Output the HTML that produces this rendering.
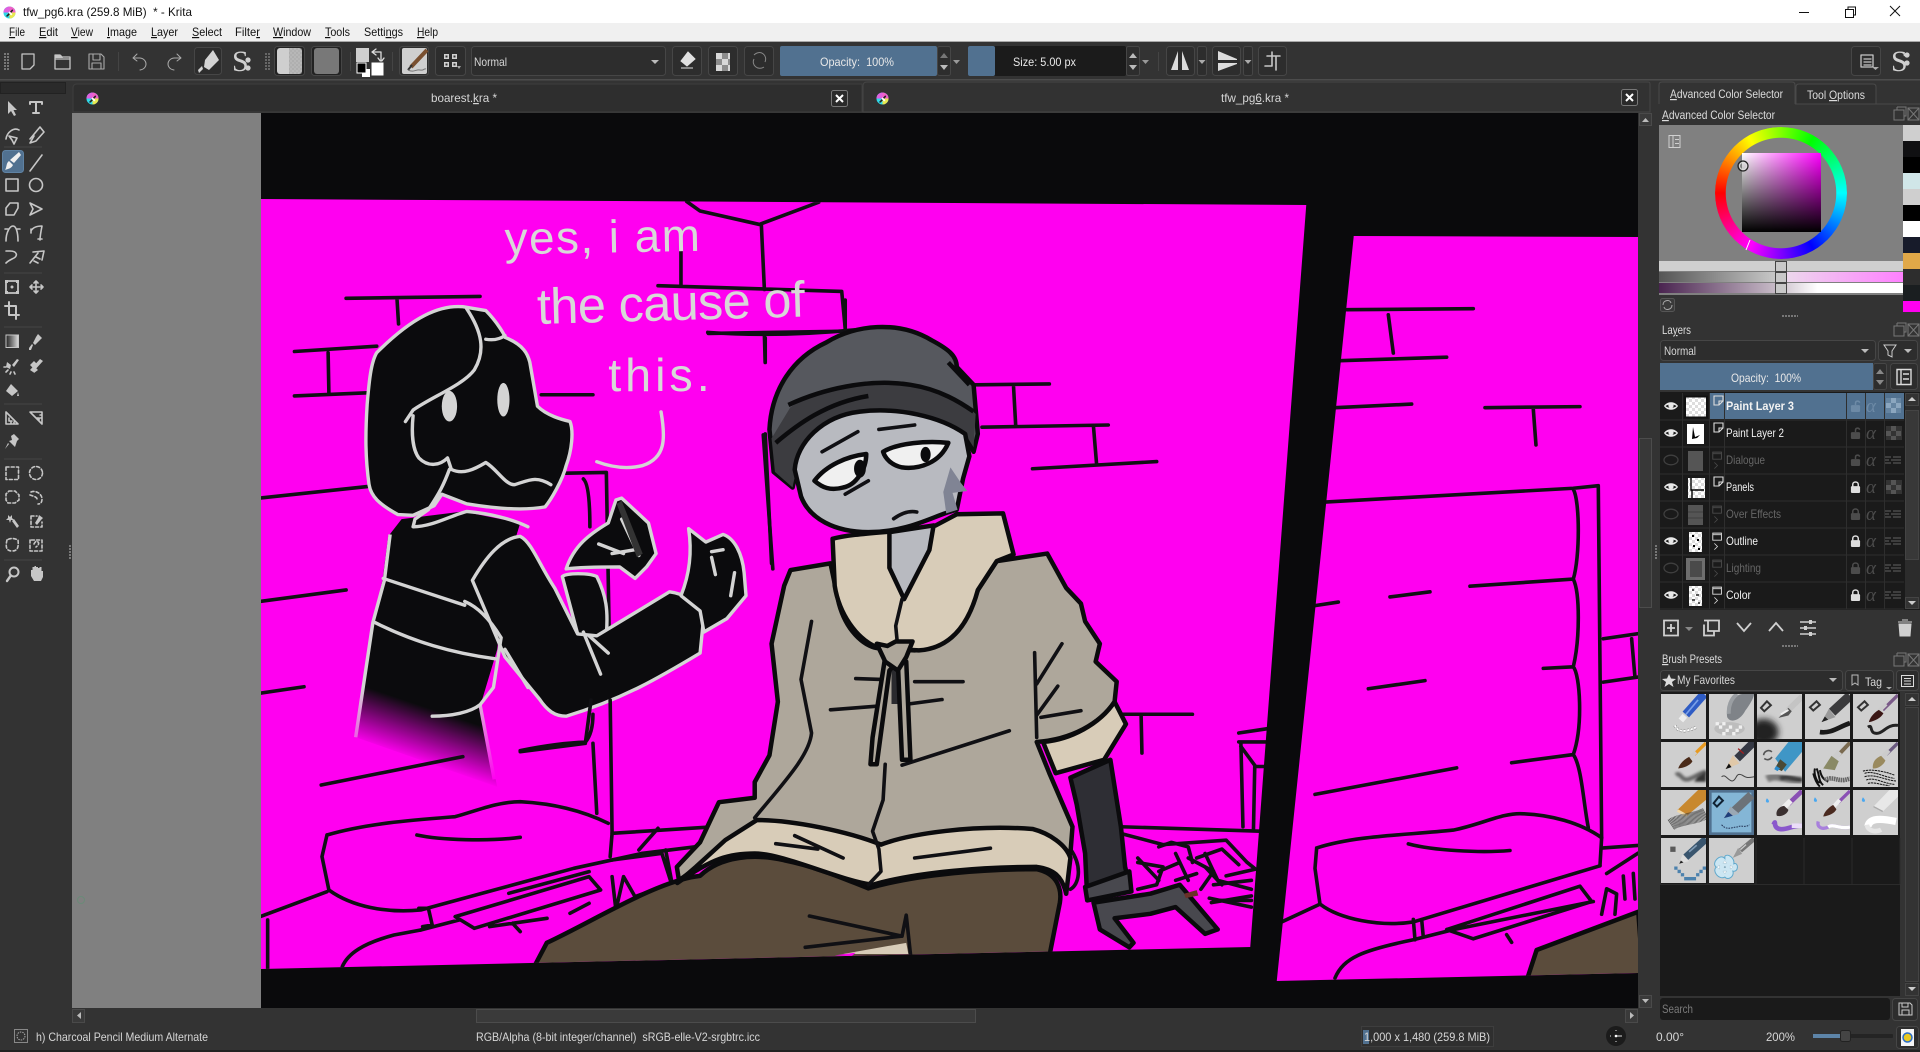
<!DOCTYPE html>
<html lang="en"><head><meta charset="utf-8"><title>tfw_pg6.kra - Krita</title>
<style>
html,body{margin:0;padding:0;width:1920px;height:1052px;overflow:hidden;background:#333}
svg{position:absolute;left:0;top:0}
text{font-family:"Liberation Sans",sans-serif;font-size:12px;fill:#d6d6d6;white-space:pre}
.m{fill:#111}
.d{fill:#666}
.u{text-decoration:underline}
.i{fill:none;stroke:#c6c6c6;stroke-width:1.6;stroke-linecap:round;stroke-linejoin:round}
.f{fill:#c6c6c6;stroke:none}
.b{fill:#2d2d2d;stroke:#464646}
.k{fill:none;stroke:#101014;stroke-width:3.6;stroke-linecap:round;stroke-linejoin:round}
.k path,.l path,path.l{vector-effect:non-scaling-stroke}
.l{fill:none;stroke:#d4d4d4;stroke-width:3.4;stroke-linecap:round;stroke-linejoin:round}
.sh{stroke:#0b0b0d;stroke-width:4.5;stroke-linejoin:round;vector-effect:non-scaling-stroke}
#wheel{position:absolute;left:1714.5px;top:126.5px;width:132px;height:132px;border-radius:50%;background:conic-gradient(from 270deg,#f00,#ff0 60deg,#0f0 120deg,#0ff 180deg,#00f 240deg,#f0f 300deg,#f00);-webkit-mask:radial-gradient(circle,transparent 55px,#000 55.5px);mask:radial-gradient(circle,transparent 55px,#000 55.5px)}
#sq{position:absolute;left:1742px;top:153px;width:79px;height:79px;background:linear-gradient(to top,#000,rgba(0,0,0,0)),linear-gradient(to right,#fff,#f0f)}
</style></head><body>
<svg width="1920" height="1052" viewBox="0 0 1920 1052" xmlns="http://www.w3.org/2000/svg">
<defs>
<clipPath id="cv"><rect x="261" y="113" width="1377" height="895"/></clipPath>
<clipPath id="lp"><polygon points="261,199 1307,205 1251,947 261,969"/></clipPath>
<clipPath id="rp"><polygon points="1353,236 1638,237 1638,973 1276,981"/></clipPath>
<filter id="bl" x="-50%" y="-50%" width="200%" height="200%"><feGaussianBlur stdDeviation="10"/></filter>
<filter id="bl2" x="-50%" y="-50%" width="200%" height="200%"><feGaussianBlur stdDeviation="4"/></filter>
<linearGradient id="fade" gradientUnits="userSpaceOnUse" x1="400" y1="1340" x2="355" y2="1473"><stop offset="0" stop-color="#0b0b0d"/><stop offset="1" stop-color="#ff00f0"/></linearGradient>
<linearGradient id="ofade" gradientUnits="userSpaceOnUse" x1="0" y1="1300" x2="0" y2="1540"><stop offset="0" stop-color="#d4d4d4"/><stop offset="1" stop-color="#ff00f0"/></linearGradient>
<linearGradient id="g2"><stop offset="0" stop-color="#555"/><stop offset=".48" stop-color="#c8c8c8"/><stop offset=".52" stop-color="#ecd8ec"/><stop offset="1" stop-color="#ff80ff"/></linearGradient>
<linearGradient id="g3"><stop offset="0" stop-color="#4a2450"/><stop offset=".48" stop-color="#c8bcc8"/><stop offset=".65" stop-color="#fff"/><stop offset="1" stop-color="#fff"/></linearGradient>
<linearGradient id="gs" x1="0" x2="1"><stop offset="0" stop-color="#222"/><stop offset="1" stop-color="#ddd"/></linearGradient>
<pattern id="chk" width="6" height="6" patternUnits="userSpaceOnUse"><rect width="6" height="6" fill="#fff"/><rect width="3" height="3" fill="#ddd"/><rect x="3" y="3" width="3" height="3" fill="#ddd"/></pattern>
<pattern id="nz" width="4" height="4" patternUnits="userSpaceOnUse"><rect width="4" height="4" fill="#8a8a8a"/><rect width="2" height="2" fill="#707070"/><rect x="2" y="2" width="2" height="2" fill="#777"/></pattern>
<symbol id="krita" viewBox="0 0 14 14" overflow="visible"><circle cx="7" cy="7" r="6.5" fill="#30d8e8"/><path d="M7 .5A6.5 6.5 0 0 1 13.5 7L7 7Z" fill="#f060c8"/><path d="M.5 7A6.5 6.5 0 0 1 7 .5L7 7Z" fill="#e060e0"/><path d="M7 13.5A6.5 6.5 0 0 0 13.5 7L7 7Z" fill="#e8e850"/><path d="M3 11L10 3.5L11 5L5 11.5Z" fill="#222"/><path d="M6.5 6.5L9.5 9.5" stroke="#fff" stroke-width="2"/></symbol>
<symbol id="eye" viewBox="0 0 16 14" overflow="visible"><path d="M1 7C4 2 12 2 15 7C12 12 4 12 1 7Z" fill="#e8e8e8"/><path d="M2.5 7C5 9.5 11 9.5 13.5 7C11 5 5 5 2.5 7Z" fill="#1a1a1a"/><circle cx="8" cy="6.6" r="2.6" fill="#e8e8e8"/></symbol>
<symbol id="eyec" viewBox="0 0 16 14" overflow="visible"><ellipse cx="8" cy="7" rx="7" ry="4.8" fill="none" stroke="#3f3f3f" stroke-width="1.3"/></symbol>
<symbol id="lockc" viewBox="0 0 12 14" overflow="visible"><rect x="1" y="6" width="10" height="7.5" rx="1.2"/><path d="M3 6.5V4.2C3 .7 9 .7 9 4.2V6.5" fill="none" stroke-width="1.6" stroke="currentColor"/></symbol>
<symbol id="locko" viewBox="0 0 12 14" overflow="visible"><rect x="1" y="6" width="10" height="7.5" rx="1.2"/><path d="M6 6V4C6 1 10 1 10.5 3.5" fill="none" stroke-width="1.6" stroke="currentColor"/></symbol>
<symbol id="chkb" viewBox="0 0 16 14"><rect width="16" height="14" fill="#333"/><path d="M5 0h5v5H5zM0 5h5v5H0zM10 5h5v5h-5zM5 10h5v4H5z" fill="#555"/></symbol>
<symbol id="inh" viewBox="0 0 16 8"><path d="M0 1h6M8 1h8M0 4h4M6 4h10M0 7h6M8 7h8" stroke="#4a4a4a" stroke-width="1.6"/></symbol>
<symbol id="lay" viewBox="0 0 12 12" overflow="visible"><path d="M1 1H10V6L6 10H1ZM10 6H6V10" fill="none" stroke="#ddd" stroke-width="1.1"/></symbol>
<symbol id="grp" viewBox="0 0 14 22" overflow="visible"><path d="M1 1H12V10H1ZM1 3H12" fill="none" stroke="currentColor" stroke-width="1.2"/><path d="M3 14L7 18L3 22" fill="none" stroke="currentColor" stroke-width="1"/></symbol>
</defs>

<!-- chrome -->
<rect width="1920" height="23" fill="#fff"/>
<rect y="23" width="1920" height="18" fill="#f0f0f0"/>
<rect y="41" width="1920" height="1" fill="#a8a8a8"/>
<rect y="42" width="1920" height="1010" fill="#333"/>
<rect y="79" width="1920" height="1.5" fill="#4c4c4c"/>
<rect y="1050" width="1920" height="2" fill="#222"/>

<use href="#krita" x="3" y="6" width="13" height="13"/>
<text x="23" y="16" style="fill:#111" textLength="169" lengthAdjust="spacingAndGlyphs">tfw_pg6.kra (259.8 MiB)  * - Krita</text>
<path d="M1799 12.500H1809" stroke="#111" stroke-width="1"/>
<path d="M1845.500 9.500H1853.500V17.500H1845.500ZM1848 9.500V7H1855.500V15H1853.500" fill="none" stroke="#111"/>
<path d="M1890 6L1900 16M1900 6L1890 16" stroke="#111" stroke-width="1"/>

<g font-size="12">
<text class="m" x="9" y="36" textLength="16" lengthAdjust="spacingAndGlyphs"><tspan class="u">F</tspan>ile</text>
<text class="m" x="39" y="36" textLength="19" lengthAdjust="spacingAndGlyphs"><tspan class="u">E</tspan>dit</text>
<text class="m" x="71" y="36" textLength="22" lengthAdjust="spacingAndGlyphs"><tspan class="u">V</tspan>iew</text>
<text class="m" x="107" y="36" textLength="30" lengthAdjust="spacingAndGlyphs"><tspan class="u">I</tspan>mage</text>
<text class="m" x="151" y="36" textLength="27" lengthAdjust="spacingAndGlyphs"><tspan class="u">L</tspan>ayer</text>
<text class="m" x="192" y="36" textLength="30" lengthAdjust="spacingAndGlyphs"><tspan class="u">S</tspan>elect</text>
<text class="m" x="235" y="36" textLength="25" lengthAdjust="spacingAndGlyphs">Filte<tspan class="u">r</tspan></text>
<text class="m" x="273" y="36" textLength="38" lengthAdjust="spacingAndGlyphs"><tspan class="u">W</tspan>indow</text>
<text class="m" x="325" y="36" textLength="25" lengthAdjust="spacingAndGlyphs"><tspan class="u">T</tspan>ools</text>
<text class="m" x="364" y="36" textLength="39" lengthAdjust="spacingAndGlyphs">Setti<tspan class="u">n</tspan>gs</text>
<text class="m" x="417" y="36" textLength="21" lengthAdjust="spacingAndGlyphs"><tspan class="u">H</tspan>elp</text>
</g>

<!-- top toolbar -->
<path d="M5 53V70M8 53V70" stroke="#777" stroke-width="2" stroke-dasharray="2 1"/>
<path class="i" style="stroke-width:1.3" d="M22 54H34V65L30 69H22Z"/>
<path class="i" style="stroke-width:1.3" d="M55 55H60L62 57H70V69H55ZM55 59H70"/><path class="f" d="M55 55h6l2 3H55z"/>
<path class="i" style="stroke-width:1.1;stroke:#aaa" d="M89 54H101L104 57V69H89ZM93 54V60H100V54M92 69V63H101V69"/>
<rect x="118" y="52" width="1" height="19" fill="#444"/>
<path class="i" style="stroke-width:1;stroke:#aaa" d="M137 54L133 58L137 61M133 58H140C148 59 148 69 140 70"/>
<path class="i" style="stroke-width:1;stroke:#aaa" d="M177 54L181 58L177 61M181 58H174C166 59 166 69 174 70"/>
<rect class="b" x="194.500" y="47.500" width="27" height="27" rx="3"/>
<path class="f" d="M213 50L219 60L209 70L204 67L205 60ZM203 69L199 73L198 70L202 66Z" style="fill:#d4d4d4"/>
<text x="232" y="71" style="font-family:'Liberation Serif',serif;font-size:30px;fill:#d0d0d0">S</text>
<circle cx="248" cy="60" r="2.600" fill="#d0d0d0"/><circle cx="248" cy="68" r="2.600" fill="#d0d0d0"/>
<path d="M266 53V70M269 53V70" stroke="#666" stroke-width="2" stroke-dasharray="2 1"/>
<rect x="274.500" y="46.500" width="30" height="29" rx="3" fill="#222" stroke="#464646"/>
<rect x="277" y="48" width="25" height="26" rx="3" fill="#cfcfcf"/><rect x="289" y="48" width="13" height="26" fill="url(#nz)" opacity=".35"/>
<rect x="311.500" y="46.500" width="30" height="29" rx="3" fill="#222" stroke="#464646"/>
<rect x="314" y="48" width="25" height="26" rx="3" fill="#787878"/>
<rect x="350" y="52" width="1" height="19" fill="#444"/>
<rect x="356" y="48" width="13" height="14" fill="#cfcfcf"/>
<path class="i" style="stroke:#ddd;stroke-width:1.3" d="M372 52H381V60M376 49L372 52L376 55M378 58L381 62L384 58"/>
<rect x="371" y="62" width="13" height="14" fill="#fff" stroke="#333"/>
<rect x="362" y="69" width="8" height="8" fill="#fff"/>
<rect x="357" y="63" width="9" height="10" fill="#000" stroke="#fff"/>
<rect x="392" y="52" width="1" height="19" fill="#444"/>
<rect x="399.500" y="46.500" width="29" height="29" rx="3" fill="#2d2d2d" stroke="#464646"/>
<rect x="402" y="48" width="25" height="26" fill="#cfcfcf" rx="2"/>
<path d="M427 50L411 67" stroke="#7a5030" stroke-width="4"/><path d="M412 65L408 70" stroke="#333" stroke-width="2"/><path d="M408 70C414 73 416 69 420 70S424 68 426 69" stroke="#777" fill="none"/>
<rect class="b" x="435.500" y="46.500" width="30" height="29" rx="3"/>
<path d="M444 54h5v5h-5zM452 54h5v5h-5zM444 62h5v5h-5zM452 62h5v5h-5z" fill="#d2d2d2"/><path d="M445.500 55.500h2v2h-2zM453.500 55.500h2v2h-2zM445.500 63.500h2v2h-2zM453.500 63.500h2v2h-2z" fill="#333"/><path d="M457 66l4 0l-2 3z" fill="#aaa"/>
<rect class="b" x="471.500" y="46.500" width="194" height="29" rx="3"/>
<text x="474" y="66" textLength="33" lengthAdjust="spacingAndGlyphs">Normal</text>
<path d="M651 60h8l-4 4z" fill="#bbb"/>
<rect class="b" x="672.500" y="46.500" width="29" height="29" rx="3"/>
<path d="M688 52L695 59L687 66L681 61ZM681 68H693" fill="#e0e0e0" stroke="#e0e0e0"/>
<rect class="b" x="708.500" y="46.500" width="29" height="29" rx="3"/>
<path d="M716 53h6v6h-6zM728 53h2v6h-2zM722 59h6v6h-6zM716 65h6v6h-6zM728 65h2v6h-2z" fill="#d8d8d8"/><path d="M722 53h6v6h-6zM716 59h6v6h-6zM728 59h2v6h-2zM722 65h6v6h-6z" fill="#8c8c8c"/>
<rect class="b" x="744.500" y="46.500" width="29" height="29" rx="3"/>
<path d="M754 55C760 49 768 55 765 62M764 67C758 71 751 65 754 59" fill="none" stroke="#888"/>
<rect x="780" y="46" width="157" height="30" rx="2" fill="#517190"/>
<text x="820" y="66" style="fill:#e8e8e8" textLength="74" lengthAdjust="spacingAndGlyphs">Opacity:  100%</text>
<rect class="b" x="937.500" y="46.500" width="13" height="29" rx="2"/>
<path d="M940 58h8l-4-5z" fill="#777"/><path d="M940 65h8l-4 5z" fill="#bbb"/>
<path d="M953 60h7l-3.500 4z" fill="#999"/>
<rect x="968" y="46" width="158" height="30" rx="2" fill="#1b1b1b"/><rect x="968" y="46" width="27" height="30" rx="2" fill="#517190"/>
<text x="1013" y="66" style="fill:#e8e8e8" textLength="63" lengthAdjust="spacingAndGlyphs">Size: 5.00 px</text>
<rect class="b" x="1126.500" y="46.500" width="13" height="29" rx="2"/>
<path d="M1129 58h8l-4-5zM1129 65h8l-4 5z" fill="#bbb"/>
<path d="M1142 60h7l-3.500 4z" fill="#999"/>
<rect x="1158" y="52" width="1" height="19" fill="#444"/>
<rect class="b" x="1166.500" y="46.500" width="28" height="29" rx="3"/>
<path d="M1178 51L1171 70H1178ZM1182 51L1189 70H1182Z" fill="#dcdcdc"/>
<rect class="b" x="1197.500" y="46.500" width="9" height="29" rx="2"/><path d="M1198.500 60h7l-3.500 4z" fill="#aaa"/>
<rect class="b" x="1212.500" y="46.500" width="28" height="29" rx="3"/>
<path d="M1218 51L1237 59V60H1218ZM1218 63H1237V64L1218 71Z" fill="#dcdcdc"/>
<rect class="b" x="1243.500" y="46.500" width="9" height="29" rx="2"/><path d="M1244.500 60h7l-3.500 4z" fill="#aaa"/>
<rect class="b" x="1258.500" y="46.500" width="28" height="29" rx="3"/>
<path class="i" d="M1267 56H1280M1272 52V66H1265M1276 56V70" stroke-linecap="square"/>
<rect class="b" x="1851.500" y="46.500" width="29" height="29" rx="3"/>
<path class="i" style="stroke-width:1.3" d="M1861 55H1873V67H1861ZM1864 59H1871M1864 62H1871M1864 65H1871"/><path d="M1872 67h7l-3.500 3z" fill="#aaa"/>
<text x="1891" y="71" style="font-family:'Liberation Serif',serif;font-size:30px;fill:#d0d0d0">S</text>
<circle cx="1907" cy="55" r="2.600" fill="#d0d0d0"/><circle cx="1907" cy="63" r="2.600" fill="#d0d0d0"/>

<!-- tabs -->
<rect x="0.500" y="82.500" width="65" height="11" fill="#2a2a2a" stroke="#222"/>
<path d="M73 112V88Q73 84 77 84H862V112Z" fill="#2e2e2e" stroke="#3e3e3e"/>
<path d="M863 112V86Q863 82 867 82H1648Q1650 82 1650 84V112Z" fill="#323232" stroke="#454545"/>
<use href="#krita" x="86" y="92" width="13" height="13"/>
<use href="#krita" x="876" y="92" width="13" height="13"/>
<text x="431" y="102" textLength="66" lengthAdjust="spacingAndGlyphs">boarest.<tspan class="u">k</tspan>ra *</text>
<text x="1221" y="102" textLength="68" lengthAdjust="spacingAndGlyphs">tfw_pg<tspan class="u">6</tspan>.kra *</text>
<rect x="831.500" y="90.500" width="16" height="16" rx="2" fill="#2a2a2a" stroke="#777"/><path d="M836 95L843 102M843 95L836 102" stroke="#fff" stroke-width="2"/>
<rect x="1621.500" y="89.500" width="16" height="16" rx="2" fill="#2a2a2a" stroke="#777"/><path d="M1626 94L1633 101M1633 94L1626 101" stroke="#fff" stroke-width="2"/>

<!-- canvas -->
<rect x="72" y="113" width="189" height="895" fill="#808080"/>
<rect x="261" y="113" width="1377" height="895" fill="#0a0a0c"/>
<circle cx="81" cy="900" r="3.500" fill="none" stroke="#6a8a78"/>
<g clip-path="url(#cv)">
<polygon points="261,199 1307,205 1251,947 261,969" fill="#ff00f0"/>
<polygon points="1353,236 1638,237 1638,973 1276,981" fill="#ff00f0"/>

<!-- LEFT ART -->
<g clip-path="url(#lp)">
<g transform="translate(260,190) scale(.3827)">
<g class="k">
<path d="M1115 30L1150 55L1305 90L1460 32M1310 90L1318 260M1100 150L1100 250M1040 250L1520 265L1530 370M1170 372Q1350 385 1560 365M1318 380L1320 450"/>
<path d="M225 283L575 278M358 285L362 350M90 422L305 408M178 425L180 530M90 538L280 530M735 535L870 535M0 805L280 775M0 1075L225 1045M0 1315L115 1298M1315 640L1340 990"/>
<path d="M800 740L905 738L915 1300M845 755Q862 770 862 880M680 1465Q780 1445 850 1443Q870 1420 870 1370"/>
</g>
<!-- goat body -->
<path d="M370 860L335 905L320 1020L295 1130L250 1430L620 1560L575 1350L620 1200L640 1000L680 870L530 840Z" fill="url(#fade)"/>
<path d="M340 900L325 1020L295 1130L250 1430" fill="none" stroke="url(#ofade)" stroke-width="9"/>
<path d="M575 1345L612 1540" fill="none" stroke="url(#ofade)" stroke-width="9"/>
<path class="l" style="fill:#0b0b0d" d="M790 1010C800 1000 860 1000 880 1010C905 1060 910 1100 905 1160L880 1180L830 1160Z"/>
<path class="l" style="fill:#0b0b0d" d="M555 1020C590 960 630 910 680 905C710 920 730 980 770 1040L830 1160L880 1165L1070 1050C1110 1055 1150 1080 1160 1110L1150 1210C1050 1270 950 1330 800 1375C770 1375 750 1360 730 1330L640 1220Z"/>
<path class="l" style="fill:#0b0b0d" d="M1100 1060C1120 1010 1130 950 1120 885L1165 920L1210 900C1240 910 1260 950 1265 1000L1270 1060L1220 1120L1160 1155L1150 1100Z"/>
<path class="l" style="fill:#0b0b0d" d="M800 990C820 930 860 900 910 870L930 810L945 805L1015 870L1035 950L1010 985L980 1015L940 985C890 985 840 985 800 990Z"/>
<path class="l" style="fill:#0b0b0d" d="M305 425C400 330 470 300 530 305L590 315C620 345 640 380 640 385C690 405 700 430 705 450L725 565C750 590 790 600 810 605C820 630 815 680 800 720C790 760 760 810 745 828C680 840 600 830 540 820L475 795L455 825L400 850L360 848C310 820 290 800 285 770C275 700 275 640 280 560C285 500 290 450 305 425Z"/>
<g class="l">
<path d="M540 310C580 370 590 420 560 470C530 510 450 540 400 575L380 605M400 590C395 640 400 680 415 700C440 725 470 720 490 700L500 730C530 745 560 730 590 712C620 730 640 770 665 770C700 760 720 745 760 770M495 730C480 770 470 790 440 835L405 860L400 880C450 880 500 850 540 840C600 845 660 860 700 880M590 390Q620 395 640 380"/>
<path d="M322 1015L535 1085M300 1130C400 1180 500 1210 615 1225M450 1375C500 1375 550 1365 575 1345M845 1155L890 1265M860 1165L910 1210M535 1075C570 1090 600 1120 630 1170M640 1200L700 1300M630 1170L610 1300L575 1345M885 925L950 950M945 860L990 955M920 950L980 940M1180 945L1210 940M1180 960L1190 1005M1240 1000L1230 1060"/>
</g>
<ellipse cx="495" cy="565" rx="20" ry="40" fill="#d4d4d4"/><ellipse cx="636" cy="548" rx="16" ry="44" fill="#d4d4d4"/>
<path d="M932 820L945 812L1000 950L985 960Z" fill="#333"/>
<path class="l" d="M1048 580C1060 650 1060 700 1000 720C960 730 920 725 880 710"/>
<text transform="rotate(-1 640 168)" x="640" y="168" style="font-size:120px;fill:#d8d8d8" textLength="510" lengthAdjust="spacing">yes, i am</text>
<text transform="rotate(-1.600 725 350)" x="725" y="350" style="font-size:132px;fill:#d8d8d8" textLength="700" lengthAdjust="spacing">the cause of</text>
<text x="910" y="525" style="font-size:122px;fill:#d8d8d8" textLength="265" lengthAdjust="spacing">this.</text>
</g>
<g transform="translate(260,700) scale(.3827,.3333)" class="k">
<path d="M160 255L530 170M915 0L920 400L915 470M870 130L880 340M680 155L850 130M865 0L850 130"/>
<path d="M0 650L175 575M20 660L20 805M175 405C280 370 400 360 510 350C560 335 620 305 680 305C760 310 840 330 910 370M175 405L162 470L180 570C240 620 330 640 420 630L820 505L1000 460M410 405C470 420 600 425 680 412M215 800C230 760 270 730 350 705L420 690"/>
<path d="M510 650L860 530L890 570L560 685ZM650 580L860 515M415 625L440 625L450 675L425 680M920 400L1190 380M1040 385L990 450M1000 460L1140 440M920 480L1050 460L1075 550L980 590M920 530L930 630L950 530L985 600M1060 450L1075 540M810 640L860 610M660 670L680 695M600 680L750 655M420 690L520 660"/>
</g>
<g transform="translate(700,300) scale(.4209,.4464)" class="k">
<path d="M20 75L335 70M345 0L345 70M155 85L155 140M655 190L830 188M745 195L750 280M670 285L970 280M935 285L942 365M790 378L1085 362M1000 928L1170 928M1048 930L1050 1015M155 300L170 590"/>
<path d="M1280 970L1350 960M1280 990L1350 990M1285 1000L1320 1045L1345 1045M1285 990L1290 1180M1318 1045L1315 1185M1000 1180L1330 1190"/>
<path d="M1000 1195L1100 1220L1250 1210L1300 1260L1320 1275L1250 1290M1040 1250L1090 1300M1200 1240L1230 1300L1310 1320M1210 1340L1310 1360M1215 1350L1310 1335M880 1230C910 1270 900 1310 880 1320"/>
<path d="M1090 1225L1120 1215L1160 1225L1170 1260M1160 1250L1220 1280L1190 1320M1130 1300L1180 1285M1220 1310L1310 1300M1040 1260L1100 1270L1085 1310L1040 1320M1220 1345H1310M1180 1250L1240 1230L1280 1265M1130 1240L1160 1300M1200 1270L1240 1310M1090 1280L1140 1260"/>
</g>
<g transform="translate(700,300) scale(.4209,.4464)">
<path class="sh" fill="#5b4c3c" d="M-392 1490L-364 1440C-250 1390 -100 1300 0 1290C50 1245 130 1240 200 1255C280 1270 350 1300 400 1318C520 1285 680 1275 800 1275C850 1285 860 1320 855 1350L830 1470L-392 1500Z"/>
<path class="sh" fill="#aea79b" d="M215 605L310 590L330 680C350 750 400 780 425 780L510 785C600 780 640 700 660 650L705 585L825 568L870 645L905 680L915 720L950 770L940 810L990 855L985 900C950 950 880 985 800 990L830 1060L885 1180L880 1240L620 1190L430 1220L135 1175L-50 1300L-55 1270L0 1215L45 1125L130 1115L130 1080L165 1020L185 900L170 770L200 640Z"/>
<path class="sh" fill="#d8ccb8" d="M135 1165C220 1165 350 1190 430 1220C500 1195 650 1175 790 1185C830 1195 870 1220 880 1250L870 1330C860 1290 840 1275 800 1270C680 1270 520 1280 410 1310C330 1300 200 1240 130 1240C70 1240 30 1250 -54 1306L-10 1270L60 1210Z"/>
<path class="sh" fill="#d8ccb8" d="M315 535C370 520 500 520 560 505L610 480L720 478L745 570L705 585L660 650C640 720 600 780 520 785L425 780C370 760 330 700 320 640Z"/>
<path class="sh" fill="#b8bac0" d="M450 520L555 505L545 560L485 670L450 600Z"/>
<path class="sh" fill="#d8ccb8" d="M985 900L1012 950L960 1030L845 1060L815 990C880 985 950 950 985 900Z"/>
<path class="sh" fill="#2e2e34" d="M880 1070L975 1030L1000 1180L1010 1270L1020 1310L920 1340L915 1240L895 1130Z"/>
<path class="sh" fill="#48484e" d="M915 1315L1020 1280L1025 1325L920 1345Z"/>
<path class="sh" fill="#48484e" d="M935 1350L1070 1330L1140 1310L1230 1410L1200 1420L1130 1360L1070 1375L985 1385L1030 1440L1020 1450L950 1410Z"/>
<path d="M1150 1330l30 -8l4 12l-30 6z" fill="#6a3028"/>
<path class="sh" fill="#56585e" d="M165 290C170 200 220 130 300 95C370 55 470 45 550 90C590 110 610 125 610 150L650 190L660 300L650 340L630 300C550 260 450 240 370 255C300 270 240 320 220 420L175 385Z"/>
<path fill="#3c3c40" d="M215 240C300 190 400 185 500 190C570 200 620 225 655 255L650 330L630 300C550 260 450 240 370 255C300 270 240 320 220 420L178 385L170 310Z"/>
<path class="sh" fill="none" d="M210 235C290 200 400 175 500 190C570 200 620 230 650 250M180 320C230 280 300 230 400 215"/>
<path class="sh" fill="none" d="M590 140L640 190"/>
<path class="sh" fill="#b8bac0" d="M225 380C230 320 290 260 380 250C470 240 570 260 630 300L640 350L625 400L610 470C560 480 500 520 400 520C320 520 260 490 240 440Z"/>
<path fill="#808494" d="M595 375L620 410L635 428L600 432L612 470L585 478L578 430Z"/>
<path class="sh" fill="#f0f0f0" d="M272 405C300 370 350 350 395 345C395 380 370 415 340 420C310 428 290 420 272 405Z"/>
<path class="sh" fill="#f0f0f0" d="M435 340C470 320 540 315 590 320C570 365 520 380 480 375C455 370 440 355 435 340Z"/>
<ellipse cx="380" cy="378" rx="14" ry="20" fill="#0b0b0d"/><ellipse cx="536" cy="346" rx="12" ry="17" fill="#0b0b0d"/>
<g class="k"><path d="M290 340L375 295M425 290L510 280M460 490Q490 470 515 475M345 435L400 405"/></g>
<g class="k">
<path d="M480 670L465 730L470 780M440 1040L435 1120L410 1190L425 1230L430 1280L400 1310M370 848L430 850M510 855L625 855M310 918L420 910M495 905L575 895M480 1042L735 965M265 720L240 850L265 970C260 1020 200 1080 130 1160M795 790L800 980M860 770L800 860M850 865L800 930M810 935L905 920M260 1380L480 1425L490 1378L500 1465M250 1450L480 1425M225 1200L340 1250M180 1218L280 1230M510 1250L690 1228"/>
</g>
<path d="M455 820L485 820L495 905L455 905Z" fill="#2a2a2e"/>
<path class="sh" fill="#aea79b" d="M440 800L410 980L405 1040L420 1040L450 830L470 810L480 1030L500 1030L490 810Z"/>
<path class="sh" fill="#aea79b" d="M420 770L445 775L465 765L505 765L490 800L470 830L440 810Z"/>
<path d="M340 1465L490 1440L495 1465Z" fill="#d8ccb8"/>
<path d="M320 1468L370 1462L360 1470Z" fill="#ff00f0"/>
</g>
</g>

<!-- RIGHT ART z12 -->
<g clip-path="url(#rp)">
<g transform="translate(1240,200) scale(.3333,.5102)">
<path class="sh" fill="#5b4c3c" d="M860 1530L890 1470L1195 1395L1210 1530Z"/>
<g class="k">
<path d="M320 215L700 213M445 225L460 300M300 315L620 308M285 407L515 400M735 407L1020 405M880 410L888 480"/>
<path d="M255 592L1000 565L1075 560M1000 567C1020 590 1020 700 1000 743C1020 770 1020 860 1000 915C1020 930 1030 1030 1000 1087C1025 1110 1030 1180 1045 1230M1075 560L1085 1250L1080 1305M690 757L1000 743M910 918L1000 915M815 1103L1000 1087M225 795L295 788M450 778L570 768M385 958L555 942M225 1165L650 1113"/>
<path d="M230 1270C350 1245 500 1245 640 1235C720 1225 790 1200 850 1203C930 1205 1020 1220 1085 1250M230 1270L225 1310L240 1380C300 1410 420 1425 520 1415L1080 1305M505 1262C580 1275 720 1280 810 1275M125 1415L240 1380M285 1525C310 1485 370 1470 520 1450L640 1430L1060 1375M620 1430L1020 1345L1055 1375L700 1448L620 1430M520 1410L525 1450M545 1410L550 1445M1085 1400L1100 1350L1130 1360L1125 1400M1090 860L1195 850M1090 945L1195 935M1175 860L1185 935M1090 1270L1195 1265M1100 1320L1195 1280M1150 1325L1155 1370M1180 1320L1185 1370M800 1440L815 1455"/>
</g>
</g>
</g>
<path d="M1307 205L1251 947M1353 236L1276 981" stroke="#0a0a0c" stroke-width="1.500" fill="none"/>
</g>

<!-- scrollbars -->
<rect x="1638" y="113" width="14" height="895" fill="#333"/>
<rect x="1639.500" y="113.500" width="12" height="12" fill="#3a3a3a" stroke="#4a4a4a"/><path d="M1642 122h7l-3.500-4z" fill="#bbb"/>
<rect x="1639.500" y="438.500" width="12" height="169" fill="#383838" stroke="#4c4c4c"/>
<rect x="1639.500" y="995.500" width="12" height="12" fill="#3a3a3a" stroke="#4a4a4a"/><path d="M1642 999h7l-3.500 4z" fill="#bbb"/>
<rect x="72.500" y="1009.500" width="12" height="13" fill="#3a3a3a" stroke="#4a4a4a"/><path d="M81 1012v7l-4-3.500z" fill="#bbb"/>
<rect x="476.500" y="1009.500" width="499" height="13" fill="#3a3a3a" stroke="#4c4c4c"/>
<rect x="1625.500" y="1009.500" width="12" height="13" fill="#3a3a3a" stroke="#4a4a4a"/><path d="M1630 1012v7l4-3.500z" fill="#bbb"/>
<path d="M70 545V560M1656 545V560" stroke="#777" stroke-width="2" stroke-dasharray="2 1"/>

<!-- left tools -->
<rect x="2.500" y="150.500" width="21" height="22" rx="3" fill="#517190" stroke="#5f82a3"/>
<path d="M4 147H42M4 273H42M4 327H42M4 404H42M4 459H42M4 560H42" stroke="#444" stroke-width="1"/>
<path class="f" d="M8 101L8 114L11 111L14 116L16 115L13.500 110H17Z"/>
<path class="i" style="stroke-width:2" d="M30 104V102H42V104M36 102V113M33 113H39"/>
<path class="i" d="M6 139C7 132 14 127 19 130M9 136L17 138L14 144L12 140Z"/>
<path class="i" d="M30 139L40 127L44 132L36 141L30 143L34 136"/>
<path d="M19 152L21 155L14 163L10 160ZM9 161L13 165C11 169 7 169 5 170C7 167 6 163 9 161Z" fill="#f0f0f0"/>
<path class="i" d="M30 171L42 155"/>
<rect class="i" x="6" y="179" width="12" height="12" stroke-linecap="square"/>
<circle class="i" cx="36" cy="185" r="6.500"/>
<path class="i" d="M6 214V208L10 203H18V208L14 215H6Z"/>
<path class="i" d="M30 203L42 209L30 215L33 209Z"/>
<path class="i" d="M6 241C6 232 10 226 13 226C16 226 18 232 18 241M5 229H8M17 229H20"/>
<path class="i" d="M31 231C33 227 38 226 42 226C41 231 40 236 40 240M31 229V233M38 239H42"/>
<path class="i" d="M6 251H10C17 251 19 256 12 259C8 261 6 263 6 263"/>
<path class="i" d="M30 263L38 253M33 252L44 251L42 260M36 257L40 259M34 261L38 263"/>
<path class="i" style="stroke-width:1.800" d="M6 281H18V293H6Z"/><circle cx="12" cy="287" r="1.500" class="f"/><path d="M5 280h3v3H5zM16 280h3v3h-3zM5 291h3v3H5zM16 291h3v3h-3z" class="f"/>
<path class="i" d="M30 287H43M36 281V293M32 285L30 287L32 289M41 285L43 287L41 289M34 283L36 281L38 283M34 291L36 293L38 291"/>
<path class="i" style="stroke-width:2" d="M9 302V315H19M5 306H16V319"/>
<rect x="6" y="335" width="12.500" height="12.500" fill="url(#gs)" stroke="#c6c6c6"/>
<path class="f" d="M38 334L42 338L40 340L35 345L33 343L36 337ZM33 345L31 350L29 350L29 348L32 344Z"/>
<path class="i" d="M6 372L8 370M10 374L11 372M6 367L4 367M14 372L15 374"/><path class="f" d="M17 359L19 360L14 367L12 365ZM7 362L11 365L10 369L6 367Z"/>
<path class="f" d="M30 365L34 361L37 364L33 368ZM35 367L38 370L34 373L32 370ZM40 359L43 361L33 372L30 370Z"/>
<path class="f" d="M11 384L18 391L12 396L6 391ZM18 392L19 396H17Z"/>
<path class="i" d="M6 412V424H18ZM9 418V421H12M11 424V422M14 424V422"/>
<path class="i" d="M30 412L42 424V412ZM36 418H39V421M42 415H40M42 418H40"/>
<path class="f" d="M11 436L14 434L19 439L17 441L15 447L9 441L12 440ZM9 444L5 449L6 447L8 443Z"/>
<g class="i" stroke-dasharray="3 2.200">
<rect x="6" y="467" width="12.500" height="12.500"/>
<circle cx="36" cy="473" r="6.500"/>
<path d="M9 491H15L19 495V500L15 503H8L6 500V494Z"/>
<path d="M31 492C36 490 42 494 42 499C42 503 40 504 38 504M30 495C33 496 37 497 37 499"/>
<path d="M31 516V527H42V522M31 516H37"/>
<path d="M7 540C5 548 7 551 12 551C17 551 19 548 18 540C14 538 10 538 7 540Z"/>
<path d="M30 540V551H42V540H30ZM34 544Q36 540 38 542T36 547"/>
</g>
<path class="f" d="M8 515L10 517L12 515L12 518L14 520L11 520L10 523L9 520L6 520L8 518ZM12 521L14 519L19 526L17 528Z"/>
<path class="f" d="M39 515L43 518L41 520L37 525L35 523L38 518Z"/>
<circle class="i" style="stroke-width:2" cx="14" cy="572" r="4.500"/><path class="i" style="stroke-width:2.400" d="M10.500 576L7 581"/>
<path class="f" d="M31 570h1.500v-3h2v-1h1.500v1h2v1h1.500v-1h2v4h1.500v6l-2 4h-7l-3-5Z"/>

<!-- right dock tabs -->
<path d="M1659 104V85Q1659 82 1662 82H1792Q1795 82 1795 85V104" fill="#333" stroke="#4a4a4a"/>
<path d="M1796 104V87Q1796 84 1799 84H1873Q1876 84 1876 87V104" fill="#2f2f2f" stroke="#4a4a4a"/>
<path d="M1795 104H1920" stroke="#4a4a4a"/>
<text x="1670" y="98" style="fill:#ddd" textLength="113" lengthAdjust="spacingAndGlyphs"><tspan class="u">A</tspan>dvanced Color Selector</text>
<text x="1807" y="99" style="fill:#ddd" textLength="58" lengthAdjust="spacingAndGlyphs">Tool <tspan class="u">O</tspan>ptions</text>
<text x="1662" y="119" style="fill:#ddd" textLength="113" lengthAdjust="spacingAndGlyphs"><tspan class="u">A</tspan>dvanced Color Selector</text>
<path d="M1894 110H1904V120H1894ZM1897 110V107M1897 107H1906V116H1904" fill="none" stroke="#777"/>
<path d="M1908 108H1919V120H1908ZM1908 108L1919 120M1919 108L1908 120" fill="none" stroke="#777"/>

<rect x="1659" y="125" width="244" height="170" fill="#808080"/>
<path d="M1669 135.500H1680V147.500H1669ZM1673 136V147M1675 139.500H1679M1675 143.500H1679" fill="none" stroke="#d0d0d0"/>
<rect x="1659" y="261" width="244" height="10" fill="#cfcfcf"/>
<rect x="1659" y="272" width="244" height="10" fill="url(#g2)"/>
<rect x="1659" y="283" width="244" height="10" fill="url(#g3)"/>
<path d="M1775.500 261.500h11v10h-11zM1775.500 272.500h11v10h-11zM1775.500 283.500h11v10h-11z" fill="#c8c8c8" stroke="#444"/>
<rect x="1903" y="125" width="17" height="16" fill="#cfcfcf"/><rect x="1903" y="141" width="17" height="16" fill="#101012"/><rect x="1903" y="157" width="17" height="16" fill="#000"/><rect x="1903" y="173" width="17" height="16" fill="#d0e6e8"/><rect x="1903" y="189" width="17" height="16" fill="#cfcfcf"/><rect x="1903" y="205" width="17" height="16" fill="#000"/><rect x="1903" y="221" width="17" height="16" fill="#fff"/><rect x="1903" y="237" width="17" height="16" fill="#171b2a"/><rect x="1903" y="253" width="17" height="16" fill="#e0a848"/><rect x="1903" y="269" width="17" height="16" fill="#2d2d2d"/><rect x="1903" y="285" width="17" height="16" fill="#1a1e20"/><rect x="1903" y="301" width="17" height="11" fill="#ff00f0"/>
<rect x="1660.500" y="298.500" width="14" height="13" rx="2" fill="#3a3a3a" stroke="#555"/><path d="M1663 305C1663 300 1670 299 1671 303M1672 305C1672 310 1665 311 1664 307" fill="none" stroke="#aaa"/>
<path d="M1782 316H1798" stroke="#777" stroke-width="2" stroke-dasharray="2 1"/>

<!-- layers -->
<text x="1662" y="334" style="fill:#ddd" textLength="29" lengthAdjust="spacingAndGlyphs">La<tspan class="u">y</tspan>ers</text>
<path d="M1894 326H1904V336H1894ZM1897 326V323M1897 323H1906V332H1904" fill="none" stroke="#777"/>
<path d="M1908 324H1919V336H1908ZM1908 324L1919 336M1919 324L1908 336" fill="none" stroke="#777"/>
<rect class="b" x="1660.500" y="340.500" width="215" height="20" rx="3"/>
<text x="1664" y="355" textLength="32" lengthAdjust="spacingAndGlyphs">Normal</text>
<path d="M1861 349h8l-4 4z" fill="#bbb"/>
<rect class="b" x="1878.500" y="340.500" width="39" height="20" rx="3"/>
<path d="M1884 345H1896L1892 351V357L1888 355V351Z" fill="none" stroke="#ccc"/><path d="M1904 349h8l-4 4z" fill="#bbb"/>
<rect x="1660" y="363" width="213" height="27" fill="#517190"/>
<text x="1731" y="382" style="fill:#e8e8e8" textLength="70" lengthAdjust="spacingAndGlyphs">Opacity:  100%</text>
<rect class="b" x="1873.500" y="363.500" width="13" height="26" rx="2"/><path d="M1876 374h8l-4-5zM1876 380h8l-4 5z" fill="#888"/>
<rect class="b" x="1890.500" y="363.500" width="27" height="26" rx="3"/>
<path d="M1897 369.500H1911V384.500H1897ZM1901 370V384M1903 374H1909M1903 379H1909" fill="none" stroke="#ddd" stroke-width="1.400"/>

<rect x="1660" y="392" width="260" height="218" fill="#1a1a1a"/>
<rect x="1710" y="393" width="194" height="26" fill="#517190"/>
<path d="M1660 420H1904M1660 447H1904M1660 474H1904M1660 501H1904M1660 528H1904M1660 555H1904M1660 582H1904M1660 609H1904M1682.500 393V609M1709.500 393V609M1724.500 393V609M1846.500 393V609M1865.500 393V609M1884.500 393V609" stroke="#2e2e2e"/>
<use href="#eye" x="1663" y="399" width="16" height="14"/><use href="#eye" x="1663" y="426" width="16" height="14"/><use href="#eyec" x="1663" y="453" width="16" height="14"/><use href="#eye" x="1663" y="480" width="16" height="14"/><use href="#eyec" x="1663" y="507" width="16" height="14"/><use href="#eye" x="1663" y="534" width="16" height="14"/><use href="#eyec" x="1663" y="561" width="16" height="14"/><use href="#eye" x="1663" y="588" width="16" height="14"/>
<rect x="1685" y="396.500" width="22" height="21" fill="url(#chk)" stroke="#111" stroke-width="2"/>
<rect x="1687" y="424" width="17" height="20" fill="#fff"/><path d="M1693 427L1695 437L1700 435L1697 438L1692 439Z" fill="#000"/>
<rect x="1688" y="451" width="15" height="20" fill="#555"/>
<rect x="1688" y="478" width="17" height="20" fill="url(#chk)"/><path d="M1691 478V490H1704M1692 490V498" stroke="#000" stroke-width="1.400" fill="none"/>
<rect x="1688" y="505" width="15" height="20" fill="#555"/><path d="M1688 512h15M1688 518h15" stroke="#3e3e3e"/>
<rect x="1689" y="532" width="13" height="20" fill="url(#chk)"/><path d="M1692 536h2M1697 540h2M1693 546h2M1698 549h2" stroke="#000" stroke-width="2"/>
<rect x="1686" y="558" width="19" height="22" fill="#6e6e6e"/><rect x="1690" y="561" width="12" height="16" fill="#4a4a4a"/>
<rect x="1689" y="586" width="13" height="20" fill="url(#chk)"/><path d="M1692 590h2M1696 595h3M1692 600h3M1698 603h2" stroke="#555" stroke-width="2"/>
<use href="#lay" x="1713" y="395" width="12" height="12"/><use href="#lay" x="1713" y="422" width="12" height="12"/>
<use href="#grp" x="1712" y="449" width="11" height="22" color="#4a4a4a"/>
<use href="#lay" x="1713" y="476" width="12" height="12"/>
<use href="#grp" x="1712" y="503" width="11" height="22" color="#4a4a4a"/>
<use href="#grp" x="1712" y="530" width="11" height="22" color="#ddd"/>
<use href="#grp" x="1712" y="557" width="11" height="22" color="#4a4a4a"/>
<use href="#grp" x="1712" y="584" width="11" height="22" color="#ddd"/>
<text x="1726" y="410" style="fill:#f2f2f2;font-weight:bold" textLength="68" lengthAdjust="spacingAndGlyphs">Paint Layer 3</text>
<text x="1726" y="437" style="fill:#f2f2f2" textLength="58" lengthAdjust="spacingAndGlyphs">Paint Layer 2</text>
<text x="1726" y="464" class="d" textLength="39" lengthAdjust="spacingAndGlyphs">Dialogue</text>
<text x="1726" y="491" style="fill:#f2f2f2" textLength="28" lengthAdjust="spacingAndGlyphs">Panels</text>
<text x="1726" y="518" class="d" textLength="55" lengthAdjust="spacingAndGlyphs">Over Effects</text>
<text x="1726" y="545" style="fill:#f2f2f2" textLength="32" lengthAdjust="spacingAndGlyphs">Outline</text>
<text x="1726" y="572" class="d" textLength="35" lengthAdjust="spacingAndGlyphs">Lighting</text>
<text x="1726" y="599" style="fill:#f2f2f2" textLength="25" lengthAdjust="spacingAndGlyphs">Color</text>
<use href="#locko" x="1850" y="399" width="11" height="14" fill="#6d8aa6" color="#6d8aa6"/>
<use href="#locko" x="1850" y="426" width="11" height="14" fill="#4c4c4c" color="#4c4c4c"/>
<use href="#locko" x="1850" y="453" width="11" height="14" fill="#4c4c4c" color="#4c4c4c"/>
<use href="#lockc" x="1850" y="480" width="11" height="14" fill="#ddd" color="#ddd"/>
<use href="#lockc" x="1850" y="507" width="11" height="14" fill="#4c4c4c" color="#4c4c4c"/>
<use href="#lockc" x="1850" y="534" width="11" height="14" fill="#ddd" color="#ddd"/>
<use href="#lockc" x="1850" y="561" width="11" height="14" fill="#4c4c4c" color="#4c4c4c"/>
<use href="#lockc" x="1850" y="588" width="11" height="14" fill="#ddd" color="#ddd"/>
<text x="1866" y="412" style="fill:#6d8aa6;font:italic 19px 'Liberation Serif',serif">α</text>
<text x="1866" y="439" style="fill:#4c4c4c;font:italic 19px 'Liberation Serif',serif">α</text>
<text x="1866" y="466" style="fill:#4c4c4c;font:italic 19px 'Liberation Serif',serif">α</text>
<text x="1866" y="493" style="fill:#4c4c4c;font:italic 19px 'Liberation Serif',serif">α</text>
<text x="1866" y="520" style="fill:#4c4c4c;font:italic 19px 'Liberation Serif',serif">α</text>
<text x="1866" y="547" style="fill:#4c4c4c;font:italic 19px 'Liberation Serif',serif">α</text>
<text x="1866" y="574" style="fill:#4c4c4c;font:italic 19px 'Liberation Serif',serif">α</text>
<text x="1866" y="601" style="fill:#4c4c4c;font:italic 19px 'Liberation Serif',serif">α</text>
<svg x="1886" y="398" width="16" height="16" viewBox="0 0 16 16"><path d="M5 0h5v5H5zM0 5h5v5H0zM10 5h5v5h-5zM5 10h5v5H5z" fill="#8ba6bf"/><path d="M0 0h5v5H0zM10 0h5v5h-5zM5 5h5v5H5zM0 10h5v5H0zM10 10h5v5h-5z" fill="#6584a1"/></svg>
<use href="#chkb" x="1886" y="426" width="16" height="14"/>
<use href="#inh" x="1885" y="456" width="16" height="8"/>
<use href="#chkb" x="1886" y="480" width="16" height="14"/>
<use href="#inh" x="1885" y="510" width="16" height="8"/>
<use href="#inh" x="1885" y="537" width="16" height="8"/>
<use href="#inh" x="1885" y="564" width="16" height="8"/>
<use href="#inh" x="1885" y="591" width="16" height="8"/>
<rect x="1905" y="393" width="15" height="216" fill="#2c2c2c"/>
<rect x="1905.500" y="393.500" width="13" height="12" fill="#333" stroke="#444"/><path d="M1908 401h8l-4-4z" fill="#ccc"/>
<rect x="1905.500" y="410.500" width="13" height="149" fill="#383838" stroke="#444"/>
<rect x="1905.500" y="597.500" width="13" height="11" fill="#333" stroke="#444"/><path d="M1908 601h8l-4 4z" fill="#ccc"/>
<path d="M1664 620.500H1678V635.500H1664ZM1671 624V632M1667 628H1675" fill="none" stroke="#d0d0d0" stroke-width="1.800"/>
<path d="M1685 627h8l-4 4z" fill="#888"/>
<path d="M1704 620.500H1719V631H1708V620.500M1704 624.500V635.500H1714V631" fill="none" stroke="#d0d0d0" stroke-width="1.800"/>
<path d="M1737 623L1744 631L1751 623" fill="none" stroke="#d0d0d0" stroke-width="1.800"/>
<path d="M1769 631L1776 623L1783 631" fill="none" stroke="#d0d0d0" stroke-width="1.800"/>
<path d="M1800 622H1816M1800 628H1816M1800 634H1816" stroke="#d0d0d0" stroke-width="1.500"/><path d="M1809 620h3v4h-3zM1804 626h3v4h-3zM1809 632h3v4h-3z" fill="#d0d0d0"/>
<path d="M1899 624H1911L1910 636H1900ZM1898 622H1912M1902 620H1908" fill="#d0d0d0" stroke="#d0d0d0"/>
<path d="M1782 646H1798" stroke="#777" stroke-width="2" stroke-dasharray="2 1"/>

<!-- brush presets -->
<text x="1662" y="663" style="fill:#ddd" textLength="60" lengthAdjust="spacingAndGlyphs"><tspan class="u">B</tspan>rush Presets</text>
<path d="M1894 656H1904V666H1894ZM1897 656V653M1897 653H1906V662H1904" fill="none" stroke="#777"/>
<path d="M1908 654H1919V666H1908ZM1908 654L1919 666M1919 654L1908 666" fill="none" stroke="#777"/>
<rect class="b" x="1660.500" y="670.500" width="182" height="20" rx="3"/>
<path d="M1669 674L1671 678.500L1676 679L1672 682L1673.500 687L1669 684L1664.500 687L1666 682L1662 679L1667 678.500Z" fill="#ddd"/>
<text x="1677" y="684" textLength="58" lengthAdjust="spacingAndGlyphs">My Favorites</text>
<path d="M1829 678h8l-4 4z" fill="#bbb"/>
<rect class="b" x="1845.500" y="670.500" width="48" height="20" rx="3"/>
<path d="M1852 675H1858V685L1855 683L1852 685Z" fill="none" stroke="#bbb"/>
<text x="1865" y="686" textLength="17" lengthAdjust="spacingAndGlyphs">Ta<tspan class="u">g</tspan></text>
<path d="M1886 687h6l-3 2.500z" fill="#aaa"/>
<rect class="b" x="1896.500" y="670.500" width="22" height="20" rx="3"/>
<path d="M1901.500 675.500H1913.500V686.500H1901.500ZM1904 678.500H1911M1904 681H1911M1904 684H1911" fill="none" stroke="#ddd"/>
<rect x="1660" y="692" width="240" height="304" fill="#1a1a1a"/>
<rect x="1905" y="692" width="15" height="304" fill="#2c2c2c"/>
<rect x="1905.500" y="693.500" width="13" height="12" fill="#333" stroke="#444"/><path d="M1908 701h8l-4-4z" fill="#ccc"/>
<rect x="1905.500" y="707.500" width="13" height="274" fill="#333" stroke="#444"/>
<rect x="1905.500" y="983.500" width="13" height="12" fill="#333" stroke="#444"/><path d="M1908 987h8l-4 4z" fill="#ccc"/>
<path d="M1660.500 885V692M1708 838V884M1756 838V884M1804 838V884M1852 838V884M1900 838V884M1660 884.500H1900" stroke="#2b2b2b"/>

<svg x="1661" y="694" width="45" height="45" viewBox="0 0 136 136"><rect width="136" height="136" fill="#cfcfcf"/><path d="M130 0L75 62" stroke="#2f5cc4" stroke-width="26"/><path d="M112 18L75 62" stroke="#7aa0e8" stroke-width="5"/><path d="M72 66L60 80" stroke="#eee" stroke-width="18"/><path d="M42 95Q55 125 108 100" fill="none" stroke="#777" stroke-width="9" stroke-dasharray="6 5"/><path d="M42 95Q55 125 108 100" fill="none" stroke="#fff" stroke-width="6" stroke-dasharray="6 5"/></svg>
<svg x="1709" y="694" width="45" height="45" viewBox="0 0 136 136"><rect width="136" height="136" fill="#cfcfcf"/><path d="M100 0C70 5 50 40 55 70C65 90 95 80 110 50C125 30 136 10 136 0Z" fill="#7f8388"/><path d="M85 0C65 15 58 40 60 60" stroke="#9a9ea2" stroke-width="12" fill="none"/><ellipse cx="62" cy="105" rx="46" ry="20" fill="#b0b0b0" opacity=".6"/><path d="M20 85h10v10H20zM40 85h10v10H40zM60 95h10v10H60zM30 95h10v10H30zM50 105h10v10H50zM80 105h10v10H80zM40 115h10v10H40zM70 115h10v10H70zM90 95h10v10H90z" fill="#f0f0f0"/></svg>
<svg x="1757" y="694" width="45" height="45" viewBox="0 0 136 136"><rect width="136" height="136" fill="#cfcfcf"/><ellipse cx="20" cy="115" rx="45" ry="40" fill="#222" filter="url(#bl)"/><path d="M136 8L95 48" stroke="#c4c4c4" stroke-width="18"/><path d="M95 42L65 72L95 65L105 52Z" fill="#555"/><path d="M72 62L95 48" stroke="#eee" stroke-width="6"/><path d="M30 22L42 34L22 52L12 42Z" fill="none" stroke="#333" stroke-width="6"/></svg>
<svg x="1805" y="694" width="45" height="45" viewBox="0 0 136 136"><rect width="136" height="136" fill="#cfcfcf"/><path d="M136 5L82 55" stroke="#3a3a3c" stroke-width="28"/><path d="M72 45L50 85L92 70Z" fill="#999"/><path d="M60 68L50 85L70 78Z" fill="#222"/><path d="M45 115C80 120 100 100 136 88" fill="none" stroke="#1a1a1a" stroke-width="14"/><path d="M35 22L45 33L25 50L15 40Z" fill="none" stroke="#333" stroke-width="6"/></svg>
<svg x="1853" y="694" width="45" height="45" viewBox="0 0 136 136"><rect width="136" height="136" fill="#cfcfcf"/><path d="M136 3L90 48" stroke="#7a5a88" stroke-width="10"/><path d="M100 30L75 55" stroke="#ccc" stroke-width="12"/><path d="M78 48C60 58 50 75 48 85C65 82 85 72 92 58Z" fill="#3a1614"/><path d="M45 100C60 90 50 115 65 118C90 125 100 90 136 95" fill="none" stroke="#222" stroke-width="9"/><path d="M35 22L45 33L25 50L15 40Z" fill="none" stroke="#333" stroke-width="6"/></svg>
<svg x="1661" y="742" width="45" height="45" viewBox="0 0 136 136"><rect width="136" height="136" fill="#cfcfcf"/><path d="M136 3L100 38" stroke="#e89a20" stroke-width="10"/><path d="M105 30L82 52" stroke="#ccc" stroke-width="12"/><path d="M85 45C65 55 55 70 52 80C70 78 90 70 95 58Z" fill="#4a2a18"/><path d="M45 100C60 88 60 120 85 112C105 105 115 95 136 90" fill="none" stroke="#666" stroke-width="13" filter="url(#bl2)"/><path d="M110 105L136 88V120L100 120Z" fill="#333" filter="url(#bl2)"/></svg>
<svg x="1709" y="742" width="45" height="45" viewBox="0 0 136 136"><rect width="136" height="136" fill="#cfcfcf"/><path d="M136 0L85 50" stroke="#343843" stroke-width="24"/><path d="M105 35L88 20" stroke="#a02020" stroke-width="4"/><path d="M72 40L50 82L92 65Z" fill="#e0c8a8"/><path d="M60 65L50 82L68 76Z" fill="#111"/><path d="M38 105C50 95 55 115 70 118C85 115 80 90 100 100C115 110 120 108 136 105" fill="none" stroke="#444" stroke-width="3"/></svg>
<svg x="1757" y="742" width="45" height="45" viewBox="0 0 136 136"><rect width="136" height="136" fill="#cfcfcf"/><path d="M30 112C60 95 80 115 136 118" fill="none" stroke="#333" stroke-width="22" opacity=".55" filter="url(#bl2)"/><path d="M70 110C90 100 115 115 136 115" fill="none" stroke="#222" stroke-width="14" opacity=".7" filter="url(#bl2)"/><path d="M136 0V30L85 90L55 50L95 0Z" fill="#3f96c6"/><path d="M70 52L55 78L75 88L90 68Z" fill="#4a4a36"/><path d="M58 72L52 82L62 88L70 80Z" fill="#2a8acb"/><path d="M20 40A15 15 0 0 1 45 30M45 45A15 15 0 0 1 22 50" fill="none" stroke="#555" stroke-width="5"/></svg>
<svg x="1805" y="742" width="45" height="45" viewBox="0 0 136 136"><rect width="136" height="136" fill="#cfcfcf"/><path d="M136 2L100 40" stroke="#7a6a50" stroke-width="12"/><path d="M105 30L88 50" stroke="#ccc" stroke-width="18"/><path d="M80 42L55 80L90 85L102 58Z" fill="#8a8a66"/><path d="M30 80C25 100 40 130 45 120M35 80C45 100 40 120 55 130M45 85C50 110 60 115 70 120M25 95C30 115 35 125 45 135" fill="none" stroke="#111" stroke-width="6"/><path d="M60 115C85 100 100 125 136 110" fill="none" stroke="#666" stroke-width="14" stroke-dasharray="5 2"/></svg>
<svg x="1853" y="742" width="45" height="45" viewBox="0 0 136 136"><rect width="136" height="136" fill="#cfcfcf"/><path d="M136 3L100 38" stroke="#6a5a80" stroke-width="10"/><path d="M108 25L88 48" stroke="#ccc" stroke-width="14"/><path d="M85 42C68 48 58 62 60 80C75 82 92 70 98 56Z" fill="#9a8a5e"/><path d="M35 95C60 85 90 105 125 110M35 105C65 95 95 115 130 118M40 115C65 105 90 125 125 128M45 125C65 120 85 130 110 132M30 88C55 80 100 90 125 100" fill="none" stroke="#111" stroke-width="3" stroke-dasharray="7 2"/></svg>
<svg x="1661" y="790" width="45" height="45" viewBox="0 0 136 136"><rect width="136" height="136" fill="#cfcfcf"/><path d="M136 0V30L78 78L50 60L112 0Z" fill="#c8882e"/><path d="M50 62L78 78" stroke="#f0d8a8" stroke-width="8"/><path d="M30 105C60 85 100 90 136 70" fill="none" stroke="#333" stroke-width="36" stroke-dasharray="2 1.500" opacity=".85"/></svg>
<svg x="1709" y="790" width="45" height="45" viewBox="0 0 136 136"><rect width="136" height="136" fill="#517190"/><rect x="8" y="8" width="120" height="120" fill="#84b6d6"/><path d="M128 15L78 62" stroke="#6c7278" stroke-width="26"/><path d="M65 50L45 85L92 72Z" fill="#9aa8b4"/><path d="M58 66L45 85L72 78Z" fill="#1e3e7a"/><path d="M38 105C55 125 75 110 85 112C95 105 110 115 122 105" fill="none" stroke="#235" stroke-width="3" stroke-dasharray="5 3"/><path d="M30 20L42 32L24 50L14 40Z" fill="none" stroke="#123" stroke-width="6"/></svg>
<svg x="1757" y="790" width="45" height="45" viewBox="0 0 136 136"><rect width="136" height="136" fill="#cfcfcf"/><path d="M136 3L95 42" stroke="#8a50b4" stroke-width="14"/><path d="M102 32L80 54" stroke="#eee" stroke-width="16"/><path d="M82 48C65 50 55 65 60 78C75 82 92 72 95 60Z" fill="#3a3030"/><path d="M50 105C60 85 45 115 70 118C90 122 110 105 136 108" fill="none" stroke="#8a58cc" stroke-width="14"/><path d="M105 108H136" stroke="#eadcf8" stroke-width="14"/><path d="M30 25C25 32 26 38 32 38C38 38 38 32 30 25Z" fill="#4aa8f0"/></svg>
<svg x="1805" y="790" width="45" height="45" viewBox="0 0 136 136"><rect width="136" height="136" fill="#cfcfcf"/><path d="M136 3L100 38" stroke="#8a50b4" stroke-width="10"/><path d="M105 30L85 52" stroke="#eee" stroke-width="12"/><path d="M85 45C68 55 58 68 55 80C72 78 90 70 95 58Z" fill="#4a2a20"/><path d="M40 95C35 115 55 120 70 112C85 100 105 120 136 112" fill="none" stroke="#a880dc" stroke-width="10"/><path d="M70 112C85 100 105 120 136 112" fill="none" stroke="#fff" stroke-width="10"/><path d="M30 22C25 30 26 36 32 36C38 36 38 30 30 22Z" fill="#4aa8f0"/></svg>
<svg x="1853" y="790" width="45" height="45" viewBox="0 0 136 136"><rect width="136" height="136" fill="#cfcfcf"/><path d="M136 0V20L90 65L62 50L110 0Z" fill="#e8e8e8"/><path d="M62 50L90 65" stroke="#aaa" stroke-width="4"/><path d="M45 110C50 85 80 85 130 95" fill="none" stroke="#fff" stroke-width="22"/><path d="M42 105C45 125 70 128 85 120" fill="none" stroke="#e6e6e6" stroke-width="14"/><path d="M30 22C25 30 26 36 32 36C38 36 38 30 30 22Z" fill="#4aa8f0"/></svg>
<svg x="1661" y="838" width="45" height="45" viewBox="0 0 136 136"><rect width="136" height="136" fill="#cfcfcf"/><path d="M136 3L75 58" stroke="#39556e" stroke-width="22"/><path d="M108 22L85 42" stroke="#7f9ab4" stroke-width="5"/><path d="M65 50L55 78L85 70Z" fill="#ddd"/><path d="M60 68L55 78L68 74Z" fill="#222"/><rect x="28" y="26" width="16" height="16" fill="#5a5a5a"/><path d="M40 86h10v10H40zM50 96h10v10H50zM60 106h10v10H60zM70 118h36v10H70zM106 106h10v10h-10zM116 96h10v10h-10zM126 86h10v10h-10z" fill="#4b81ad"/></svg>
<svg x="1709" y="838" width="45" height="45" viewBox="0 0 136 136"><rect width="136" height="136" fill="#cfcfcf"/><path d="M136 3L95 38" stroke="#777" stroke-width="14"/><path d="M112 20L95 35" stroke="#ccc" stroke-width="4"/><path d="M88 30L72 60L100 48Z" fill="#999"/><path d="M48 55C58 45 78 62 75 78C90 72 90 105 72 100C78 115 58 130 48 118C30 128 8 100 22 88C5 75 35 45 48 62Z" fill="#cce6f2" stroke="#5fa8cc" stroke-width="3"/><path d="M48 68L42 76H54ZM48 108L42 100H54ZM24 88L32 82V94ZM72 88L64 82V94Z" fill="#fff" stroke="#8ab"/><circle cx="48" cy="88" r="3" fill="#8ab"/></svg>

<!-- search & status -->
<rect x="1660" y="998" width="230" height="22" rx="3" fill="#1a1a1a"/>
<text x="1662" y="1013" textLength="31" lengthAdjust="spacingAndGlyphs" style="fill:#7a7a7a">Search</text>
<rect class="b" x="1892.500" y="998.500" width="25" height="22" rx="3"/>
<path d="M1899 1003H1910L1912 1005V1015H1899ZM1902 1003V1007H1908V1003M1902 1015V1010H1909V1015" fill="none" stroke="#ccc"/>

<rect x="14.500" y="1029.500" width="13" height="13" fill="none" stroke="#888"/><circle cx="21" cy="1036" r="4" fill="none" stroke="#aaa" stroke-dasharray="1.500 1"/>
<text x="36" y="1041" textLength="172" lengthAdjust="spacingAndGlyphs">h) Charcoal Pencil Medium Alternate</text>
<text x="476" y="1041" textLength="284" lengthAdjust="spacingAndGlyphs">RGB/Alpha (8-bit integer/channel)  sRGB-elle-V2-srgbtrc.icc</text>
<rect x="1361.500" y="1026.500" width="132" height="20" fill="#2f2f2f" stroke="#3e3e3e"/>
<rect x="1363" y="1030" width="6" height="14" fill="#517190"/>
<text x="1364" y="1041" textLength="126" lengthAdjust="spacingAndGlyphs">1,000 x 1,480 (259.8 MiB)</text>
<circle cx="1616" cy="1036" r="10" fill="#1b1b1b"/><path d="M1616 1036H1622M1610 1036H1611M1616 1030V1031M1616 1041V1042" stroke="#ddd"/><circle cx="1616" cy="1036" r="1.300" fill="#fff"/>
<text x="1656" y="1041" textLength="28" lengthAdjust="spacingAndGlyphs">0.00°</text>
<text x="1766" y="1041" textLength="29" lengthAdjust="spacingAndGlyphs">200%</text>
<rect x="1813" y="1034" width="80" height="4" rx="1" fill="#242424"/><rect x="1813" y="1034" width="32" height="4" fill="#5d84a8"/>
<rect x="1840.500" y="1030.500" width="10" height="11" rx="2" fill="#444" stroke="#222"/>
<rect class="b" x="1896.500" y="1026.500" width="22" height="22" rx="3"/>
<rect x="1901" y="1029" width="13" height="17" fill="#f4f4f4"/><circle cx="1907.500" cy="1037.500" r="4.500" fill="#e8c820" stroke="#2a6cc8" stroke-width="1.500"/>
</svg>

<div id="wheel"></div>
<div id="sq"></div>
<svg width="1920" height="1052" viewBox="0 0 1920 1052" xmlns="http://www.w3.org/2000/svg" style="pointer-events:none">
<circle cx="1743" cy="166" r="5" fill="none" stroke="#222" stroke-width="1.200"/><circle cx="1743" cy="166" r="3.500" fill="none" stroke="#ddd"/>
<path d="M1750 240L1746 250" stroke="#fff" stroke-width="1"/>
</svg>
</body></html>
